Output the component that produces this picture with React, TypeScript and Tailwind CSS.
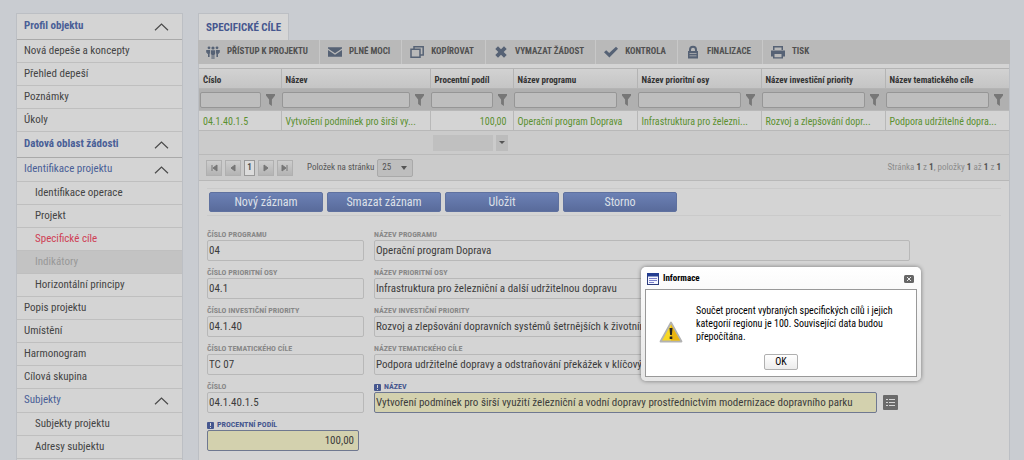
import type { ReactNode } from "react";

const menu = [
  { label: "Profil objektu", kind: "header" },
  { label: "Nová depeše a koncepty", kind: "item" },
  { label: "Přehled depeší", kind: "item" },
  { label: "Poznámky", kind: "item" },
  { label: "Úkoly", kind: "item" },
  { label: "Datová oblast žádosti", kind: "header" },
  { label: "Identifikace projektu", kind: "group" },
  { label: "Identifikace operace", kind: "sub" },
  { label: "Projekt", kind: "sub" },
  { label: "Specifické cíle", kind: "active" },
  { label: "Indikátory", kind: "disabled" },
  { label: "Horizontální principy", kind: "sub" },
  { label: "Popis projektu", kind: "item" },
  { label: "Umístění", kind: "item" },
  { label: "Harmonogram", kind: "item" },
  { label: "Cílová skupina", kind: "item" },
  { label: "Subjekty", kind: "group" },
  { label: "Subjekty projektu", kind: "sub" },
  { label: "Adresy subjektu", kind: "sub" },
];

const menuStyles: Record<string, string> = {
  header: "h-[26px] border-[#a9a9a9] pl-[7px] font-bold text-[#4a5f97]",
  group: "h-6 border-[#bfbfbf] pl-[7px] text-[#4a5f97]",
  item: "h-[23px] border-[#bfbfbf] pl-[7px] text-[#444]",
  sub: "h-[23px] border-[#bfbfbf] pl-[18px] text-[#444]",
  active: "h-[23px] border-[#bfbfbf] pl-[18px] text-[#cf4055]",
  disabled: "h-[23px] border-[#bfbfbf] bg-[#c3c3c3] pl-[18px] text-[#989898]",
};

const columns = [
  { title: "Číslo", value: "04.1.40.1.5", width: "w-[82px]" },
  { title: "Název", value: "Vytvoření podmínek pro širší vy...", width: "w-[149px]" },
  { title: "Procentní podíl", value: "100,00", width: "w-[83px]" },
  { title: "Název programu", value: "Operační program Doprava", width: "w-[124px]" },
  { title: "Název prioritní osy", value: "Infrastruktura pro železni...", width: "w-[124px]" },
  { title: "Název investiční priority", value: "Rozvoj a zlepšování dopr...", width: "w-[124px]" },
  { title: "Název tematického cíle", value: "Podpora udržitelné dopra...", width: "w-[124px]" },
];

const rows = [
  ["Číslo programu", "04", "Název programu", "Operační program Doprava"],
  ["Číslo prioritní osy", "04.1", "Název prioritní osy", "Infrastruktura pro železniční a další udržitelnou dopravu"],
  [
    "Číslo investiční priority",
    "04.1.40",
    "Název investiční priority",
    "Rozvoj a zlepšování dopravních systémů šetrnějších k životnímu prostředí",
  ],
  [
    "Číslo tematického cíle",
    "TC 07",
    "Název tematického cíle",
    "Podpora udržitelné dopravy a odstraňování překážek v klíčových síťových infrastrukturách",
  ],
];

function Chevron() {
  return (
    <svg className="mr-[13px] h-2 w-[15px]" viewBox="0 0 15 8" fill="none" stroke="#4a4a4a" strokeWidth="1.2">
      <path d="M1 7.3 7.5 1 14 7.3" />
    </svg>
  );
}

function Funnel() {
  return (
    <svg className="h-3 w-[9px] shrink-0" viewBox="0 0 9 12" fill="#777">
      <path d="M0 0h9v1.5L5.9 5.5V12L3.1 10V5.5L0 1.5z" />
    </svg>
  );
}

function ToolIcon({ children }: { children: ReactNode }) {
  return (
    <svg className="h-[14px] w-[14px] shrink-0" viewBox="0 0 14 14" fill="#566275">
      {children}
    </svg>
  );
}

const tools = [
  {
    label: "PŘÍSTUP K PROJEKTU",
    icon: (
      <>
        <circle cx="3" cy="2.8" r="1.4" />
        <circle cx="11" cy="2.8" r="1.4" />
        <circle cx="7" cy="3" r="1.6" />
        <path d="M.2 5h3.9v3.6h-.5V12H2V9H1.3V7.7H.2zM9.900 5h3.900v2.700h-1.100V9H12v3h-1.600V8.600h-.5zM4.900 5.200h4.200v4.400h-.7V14H7.400v-4h-.8v4H5.600V9.600h-.7z" />
      </>
    ),
  },
  {
    label: "PLNÉ MOCI",
    icon: <path d="M0 2.200h14v1.300L7 8.300 0 3.500zM0 5l7 4.700L14 5v6.800H0z" />,
  },
  {
    label: "KOPÍROVAT",
    icon: <path fill="none" stroke="#566275" strokeWidth="1.5" d="M4 4V1.800h9.200V10H10M1 4.300h9v8H1z" />,
  },
  {
    label: "VYMAZAT ŽÁDOST",
    icon: <path d="M1.300 4 4 1.300l3 3 3-3L12.700 4l-3 3 3 3L10 12.700l-3-3-3 3L1.300 10l3-3z" />,
  },
  {
    label: "KONTROLA",
    icon: <path d="M0 7.200 2.200 5.200 5.200 8 12 1.800 14 3.800 5.400 12.600z" />,
  },
  {
    label: "FINALIZACE",
    icon: (
      <path
        fillRule="evenodd"
        d="M2 6h1V4.800a4 4 0 0 1 8 0V6h1v7.500H2zM5 6h4V4.800a2 2 0 0 0-4 0zM3.500 8v.8h7V8zM3.500 10.500v.8h7v-.8z"
      />
    ),
  },
  {
    label: "TISK",
    icon: (
      <path
        fillRule="evenodd"
        d="M2 1h10v4H2zM3.500 2.500V5h7V2.500zM0 5.500h14v6h-2v2H2v-2H0zM3.500 9v3.200h7V9z"
      />
    ),
  },
];

const pagerIcons = ["M2 1v6M7 1 3 4l4 3z", "M6 1 2 4l4 3z", "M2 1l4 3-4 3z", "M6 1v6M1 1l4 3-4 3z"];

function PagerButton({ index, label }: { index: number; label: string }) {
  return (
    <button
      aria-label={label}
      className="flex h-4 w-4 items-center justify-center border border-[#b0b0b0] bg-linear-to-b from-[#cdcdcd] to-[#b4b4b4]"
    >
      <svg className="h-2 w-2" viewBox="0 0 8 8" fill="#777" stroke="#777" strokeWidth="1">
        <path d={pagerIcons[index]} />
      </svg>
    </button>
  );
}

function Required() {
  return (
    <svg className="mr-[3px] h-[7px] w-[7px]" viewBox="0 0 7 7">
      <rect width="7" height="7" rx="1" fill="#46578f" />
      <path d="M3 1h1v3H3zM3 5h1v1H3z" fill="#d4d4d4" />
    </svg>
  );
}

type FieldProps = { id: string; label: string; value: string; required?: boolean; className?: string };

function Field({ id, label, value, required, className = "" }: FieldProps) {
  return (
    <div className={className}>
      <label
        htmlFor={id}
        className={`flex h-[10px] items-center text-[8px] leading-[10px] font-bold uppercase ${
          required ? "text-[#46578f]" : "text-[#888]"
        }`}
      >
        {required && <Required />}
        {label}
      </label>
      <input
        id={id}
        defaultValue={value}
        readOnly={!required}
        className={`block h-[21px] w-full rounded-[2px] border px-[1px] text-[11px] text-[#3c3c3c] outline-none ${
          required ? "border-[#6f7890] bg-[#d3d1ae]" : "border-[#b8b8b8] bg-[#d4d4d4]"
        }`}
      />
    </div>
  );
}

function Sidebar() {
  return (
    <nav className="w-[167px] shrink-0 border-x border-t border-[#bcbfc4] bg-[#d4d4d4] text-[11px]">
      {menu.map(({ label, kind }) => (
        <a key={label} href="#" className={`flex items-center justify-between border-b ${menuStyles[kind]}`}>
          {label}
          {(kind === "header" || kind === "group") && <Chevron />}
        </a>
      ))}
    </nav>
  );
}

function Grid() {
  return (
    <table className="w-full table-fixed border-collapse text-left">
      <thead>
        <tr className="h-5 bg-linear-to-b from-[#d2d2d2] to-[#c4c4c4]">
          {columns.map(({ title, width }) => (
            <th
              key={title}
              className={`border border-[#b4b4b4] pt-0.5 pl-1 text-[9px] leading-4 font-bold text-[#333] first:border-l-0 last:border-r-0 ${width}`}
            >
              {title}
            </th>
          ))}
        </tr>
        <tr className="h-[22px] bg-[#b0b0b0]">
          {columns.map(({ title }) => (
            <td key={title} className="p-0">
              <div className="flex items-center gap-[5px] pr-1.5 pl-px">
                <input
                  aria-label={`Filtr ${title}`}
                  className="h-4 w-full min-w-0 rounded-[2px] border border-[#969696] bg-[#bebebe] outline-none"
                />
                <Funnel />
              </div>
            </td>
          ))}
        </tr>
      </thead>
      <tbody>
        <tr className="h-5 bg-[#d4d4d4]">
          {columns.map(({ title, value }) => (
            <td
              key={title}
              className={`border border-[#b8b8b8] pt-[3px] pb-0 pl-1 text-[10px] leading-4 whitespace-nowrap text-[#5b9030] first:border-l-0 last:border-r-0 ${
                title === "Procentní podíl" ? "pr-1.5 text-right" : "pr-0"
              }`}
            >
              {value}
            </td>
          ))}
        </tr>
        <tr className="h-6 border-b border-[#bababa] bg-[#cbcbcb]">
          <td colSpan={2} />
          <td className="p-0">
            <div className="flex gap-[3px] pl-[3px]">
              <div className="h-4 w-[60px] bg-[#c0c0c0]" />
              <button aria-label="Souhrn" className="flex h-4 w-3 items-center justify-center bg-[#bcbcbc]">
                <span className="border-x-[3px] border-t-[3px] border-x-transparent border-t-[#555]" />
              </button>
            </div>
          </td>
          <td colSpan={4} />
        </tr>
      </tbody>
    </table>
  );
}

function Pager() {
  return (
    <div className="flex h-[26px] items-center border-b border-[#b8b8b8] bg-[#cbcbcb] pr-2 pl-[7px] text-[9px] text-[#555]">
      <div className="flex items-center gap-[3px]">
        <PagerButton index={0} label="První" />
        <PagerButton index={1} label="Předchozí" />
        <button className="h-4 w-[11px] border border-[#999] bg-[#dcdcdc] font-bold leading-none">1</button>
        <PagerButton index={2} label="Další" />
        <PagerButton index={3} label="Poslední" />
      </div>
      <label htmlFor="page-size" className="mr-[3px] ml-[14px]">
        Položek na stránku
      </label>
      <div className="relative">
        <select
          id="page-size"
          className="block h-[18px] w-9 appearance-none rounded-[2px] border border-[#a9a9a9] bg-[#bebebe] pl-1 leading-none"
        >
          <option>25</option>
        </select>
        <span className="pointer-events-none absolute top-[7px] right-[6px] border-x-[3px] border-t-[4px] border-x-transparent border-t-[#555]" />
      </div>
      <span className="ml-auto text-[#8c8c8c]">
        Stránka <b className="text-[#555]">1</b> z <b className="text-[#555]">1</b>, položky{" "}
        <b className="text-[#555]">1</b> až <b className="text-[#555]">1</b> z <b className="text-[#555]">1</b>
      </span>
    </div>
  );
}

function Dialog() {
  return (
    <div
      role="dialog"
      aria-labelledby="dialog-title"
      className="absolute top-[267px] left-[641px] w-[280px] rounded-[5px] bg-linear-to-b from-white via-[#f2f2f2] to-[#e6e6e6] px-1 pb-1 text-black shadow-[0_0_4px_0_rgba(0,0,0,0.45)]"
    >
      <div className="flex h-[22px] items-center pt-0.5 pr-[3px] pl-0.5">
        <svg className="h-3 w-3" viewBox="0 0 12 12">
          <rect x=".5" y=".5" width="11" height="11" fill="#f4f6ff" stroke="#2c3c7c" />
          <rect width="12" height="3.5" fill="#243e91" />
          <path d="M2 5.500h8M2 7.500h8M2 9.500h5" stroke="#7b80ca" />
        </svg>
        <h2 id="dialog-title" className="ml-1 text-[9px] font-bold">
          Informace
        </h2>
        <button aria-label="Zavřít" className="ml-auto">
          <svg className="h-2 w-2.5" viewBox="0 0 10 8">
            <rect width="10" height="8" rx="1.5" fill="#666" />
            <path d="m3 2 4 4M7 2 3 6" stroke="#e8e8e8" />
          </svg>
        </button>
      </div>
      <div className="border border-[#999] bg-white pt-[14px] pb-[6px]">
        <div className="flex items-end pl-[13px]">
          <svg className="h-[22px] w-6 shrink-0" viewBox="0 0 24 22">
            <path d="M12 1.500 22.500 20.500h-21z" fill="#f8d824" stroke="#b2b2b2" strokeWidth="1.8" strokeLinejoin="round" />
            <path d="M12 3.500 21 19.500h-9z" fill="#eab512" />
            <path d="M10.500 7h3l-.6 7h-1.800zM10.700 15.500h2.600V18h-2.600z" fill="#242424" />
          </svg>
          <p className="ml-[13px] pr-4 text-[10px] leading-[13px]">
            Součet procent vybraných specifických cílů i jejich kategorií regionu je 100. Související data budou přepočítána.
          </p>
        </div>
        <button className="mx-auto mt-[11px] block h-4 w-[34px] rounded-[2px] border border-[#b0b0b0] bg-linear-to-b from-white to-[#ececec] text-[10px] leading-none">
          OK
        </button>
      </div>
    </div>
  );
}

export default function App() {
  return (
    <div className="relative flex min-h-screen items-stretch gap-[15px] bg-[#c9ccd1] pt-[13px] pr-[14px] pl-4 font-['Roboto_Condensed','Liberation_Sans_Narrow',Roboto,sans-serif]">
      <Sidebar />
      <main className="flex min-w-0 flex-1 flex-col">
        <h1 className="h-[27px] self-start border border-b-0 border-[#bcbfc4] bg-[#d6d6d6] px-[7px] text-[11px] leading-[27px] font-bold text-[#46578f]">
          SPECIFICKÉ CÍLE
        </h1>
        <div className="flex h-6 bg-[#b9b9b9]">
          {tools.map(({ label, icon }) => (
            <button
              key={label}
              className="flex items-center gap-[7px] border-r border-[#c8c8c8] pr-[11px] pl-2 text-[9px] font-bold text-[#505050] last:border-r-0"
            >
              <ToolIcon>{icon}</ToolIcon>
              {label}
            </button>
          ))}
        </div>
        <div className="flex-1 border-x border-[#bcbfc4] bg-[#d4d4d4] pt-1">
          <Grid />
          <Pager />
          <div className="mx-2 mt-[7px] flex gap-1 border-y border-[#cacaca] py-[3px] pl-0.5">
            {["Nový záznam", "Smazat záznam", "Uložit", "Storno"].map((label) => (
              <button
                key={label}
                className="h-5 w-[114px] rounded-[2px] border border-[#5f719f] bg-linear-to-b from-[#6c81b5] to-[#596b9b] text-[12px] leading-none text-[#dde0e8]"
              >
                {label}
              </button>
            ))}
          </div>
          <form className="mt-[14px] flex flex-col gap-[7px] pl-2">
            {rows.map(([codeLabel, code, nameLabel, name]) => (
              <div key={codeLabel} className="flex gap-[10px]">
                <Field id={codeLabel} label={codeLabel} value={code} className="w-[157px] shrink-0" />
                <Field id={nameLabel} label={nameLabel} value={name} className="mr-[99px] flex-1" />
              </div>
            ))}
            <div className="flex items-end gap-[10px]">
              <Field id="cislo" label="Číslo" value="04.1.40.1.5" className="w-[157px] shrink-0" />
              <div className="mr-[111px] flex flex-1 items-end gap-[6px]">
                <Field
                  id="nazev"
                  label="Název"
                  value="Vytvoření podmínek pro širší využití železniční a vodní dopravy prostřednictvím modernizace dopravního parku"
                  required
                  className="flex-1"
                />
                <button type="button" aria-label="Vybrat ze seznamu" className="mb-[3px]">
                  <svg className="h-[15px] w-[15px]" viewBox="0 0 15 15">
                    <rect width="15" height="15" rx="1" fill="#6a6a6a" />
                    <path d="M3 4.500h2M6 4.500h6M3 7.500h2M6 7.500h6M3 10.500h2M6 10.500h6" stroke="#d4d4d4" />
                  </svg>
                </button>
              </div>
            </div>
            <Field id="podil" label="Procentní podíl" value="100,00" required className="w-[152px] [&_input]:pr-1 [&_input]:text-right" />
          </form>
        </div>
      </main>
      <Dialog />
    </div>
  );
}
